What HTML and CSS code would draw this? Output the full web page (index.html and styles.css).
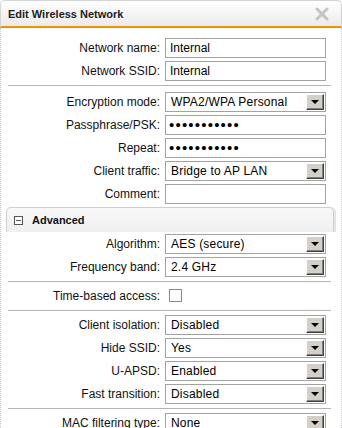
FILE: index.html
```html
<!DOCTYPE html>
<html lang="en">
<head>
    <meta charset="UTF-8">
    <title>Edit Wireless Network</title>
    <link rel="stylesheet" href="styles.css">
</head>
<body>
<div class="dialog">
    <div class="titlebar">
        <span class="title">Edit Wireless Network</span>
        <svg class="close" width="14" height="14" viewBox="0 0 14 14">
            <path d="M2 2 L12 12 M12 2 L2 12" stroke="#c4c4c4" stroke-width="3" stroke-linecap="round"/>
        </svg>
    </div>
    <div class="content">
        <div class="row"><label class="lbl">Network name:</label><input class="field" type="text" value="Internal"></div>
        <div class="row"><label class="lbl">Network SSID:</label><input class="field" type="text" value="Internal"></div>
        <div class="sep sep-wide"></div>
        <div class="row"><label class="lbl">Encryption mode:</label><div class="field select"><span class="val">WPA2/WPA Personal</span><span class="btn"><i class="arrow"></i></span></div></div>
        <div class="row"><label class="lbl">Passphrase/PSK:</label><input class="field pass" type="password" value="xxxxxxxxxxx"></div>
        <div class="row"><label class="lbl">Repeat:</label><input class="field pass" type="password" value="xxxxxxxxxxx"></div>
        <div class="row"><label class="lbl">Client traffic:</label><div class="field select"><span class="val">Bridge to AP LAN</span><span class="btn"><i class="arrow"></i></span></div></div>
        <div class="row"><label class="lbl">Comment:</label><input class="field" type="text" value=""></div>

        <div class="section-head"><span class="toggle"></span>Advanced</div>
        <div class="row"><label class="lbl">Algorithm:</label><div class="field select"><span class="val">AES (secure)</span><span class="btn"><i class="arrow"></i></span></div></div>
        <div class="row"><label class="lbl">Frequency band:</label><div class="field select"><span class="val">2.4 GHz</span><span class="btn"><i class="arrow"></i></span></div></div>
        <div class="sep"></div>
        <div class="row"><label class="lbl">Time-based access:</label><span class="check"></span></div>
        <div class="sep"></div>
        <div class="row"><label class="lbl">Client isolation:</label><div class="field select"><span class="val">Disabled</span><span class="btn"><i class="arrow"></i></span></div></div>
        <div class="row"><label class="lbl">Hide SSID:</label><div class="field select"><span class="val">Yes</span><span class="btn"><i class="arrow"></i></span></div></div>
        <div class="row"><label class="lbl">U-APSD:</label><div class="field select"><span class="val">Enabled</span><span class="btn"><i class="arrow"></i></span></div></div>
        <div class="row"><label class="lbl">Fast transition:</label><div class="field select"><span class="val">Disabled</span><span class="btn"><i class="arrow"></i></span></div></div>
        <div class="sep"></div>
        <div class="row"><label class="lbl">MAC filtering type:</label><div class="field select"><span class="val">None</span><span class="btn"><i class="arrow"></i></span></div></div>
    </div>
</div>
</body>
</html>
```

FILE: styles.css
```css
body {
    margin: 0;
    background: #FFFFFF;
    font-family: "Liberation Sans", Arial, sans-serif;
    font-size: 12px;
    color: #111;
}

.dialog {
    width: 342px;
    height: 428px;
    overflow: hidden;
}

.titlebar {
    height: 28px;
    box-sizing: border-box;
    display: flex;
    align-items: center;
    justify-content: space-between;
    padding: 0 12px 0 7px;
    border: 1px solid #d4d4d4;
    border-bottom: 2px solid #f39200;
    border-radius: 5px 5px 0 0;
    background: linear-gradient(#ffffff, #ebebeb);
}

.title {
    font-weight: bold;
    font-size: 11px;
    color: #222;
}

.content {
    border-left: 1px dotted #c8c8c8;
    border-right: 1px dotted #c8c8c8;
    padding-top: 8px;
    height: 420px;
}

.row {
    display: flex;
    align-items: center;
    height: 23px;
    gap: 5px;
}

.lbl {
    width: 159px;
    text-align: right;
    white-space: nowrap;
}

.field {
    width: 161px;
    height: 20px;
    box-sizing: border-box;
    border: 1px solid #a2a2a2;
    padding: 0 4px;
    margin: 0;
    font-family: "Liberation Sans", Arial, sans-serif;
    font-size: 12px;
    color: #000;
    background: #fff;
    outline: none;
}

.pass {
    font-size: 15px;
    letter-spacing: 1.2px;
    padding-left: 3px;
}

.select {
    display: flex;
    align-items: center;
    padding: 1px 1px 1px 5px;
}

.select .val {
    flex: 1;
    letter-spacing: 0.2px;
}

.btn {
    width: 18px;
    height: 16px;
    box-sizing: border-box;
    display: flex;
    align-items: center;
    justify-content: center;
    background: #d4d0c8;
    border-top: 1px solid #fff;
    border-left: 1px solid #fff;
    border-right: 1px solid #404040;
    border-bottom: 1px solid #404040;
    box-shadow: inset -1px -1px 0 #808080;
}

.arrow {
    width: 0;
    height: 0;
    border-left: 4px solid transparent;
    border-right: 4px solid transparent;
    border-top: 4px solid #000;
    margin: 1px 1px 0 0;
}

.sep {
    height: 1px;
    background: #b4b4b4;
    margin: 3px 10px 2px 7px;
}

.sep-wide {
    margin-bottom: 4px;
}

.section-head {
    display: flex;
    align-items: center;
    gap: 9px;
    height: 25px;
    box-sizing: border-box;
    margin: 2px 7px 0 5px;
    padding-left: 7px;
    border: 1px solid #cfcfcf;
    border-bottom: none;
    border-radius: 5px 5px 0 0;
    background: linear-gradient(#f8f8f8, #eef0f0);
    box-shadow: 2px 0 0 #e4e4e4;
    font-weight: bold;
    font-size: 11px;
    color: #111;
}

.toggle {
    width: 9px;
    height: 9px;
    box-sizing: border-box;
    border: 1px solid #555;
    background: linear-gradient(#555, #555) center / 5px 1px no-repeat, #fff;
}

.check {
    width: 13px;
    height: 13px;
    box-sizing: border-box;
    margin-left: 4px;
    border: 1px solid #8a8a8a;
    background: #fff;
}
```
